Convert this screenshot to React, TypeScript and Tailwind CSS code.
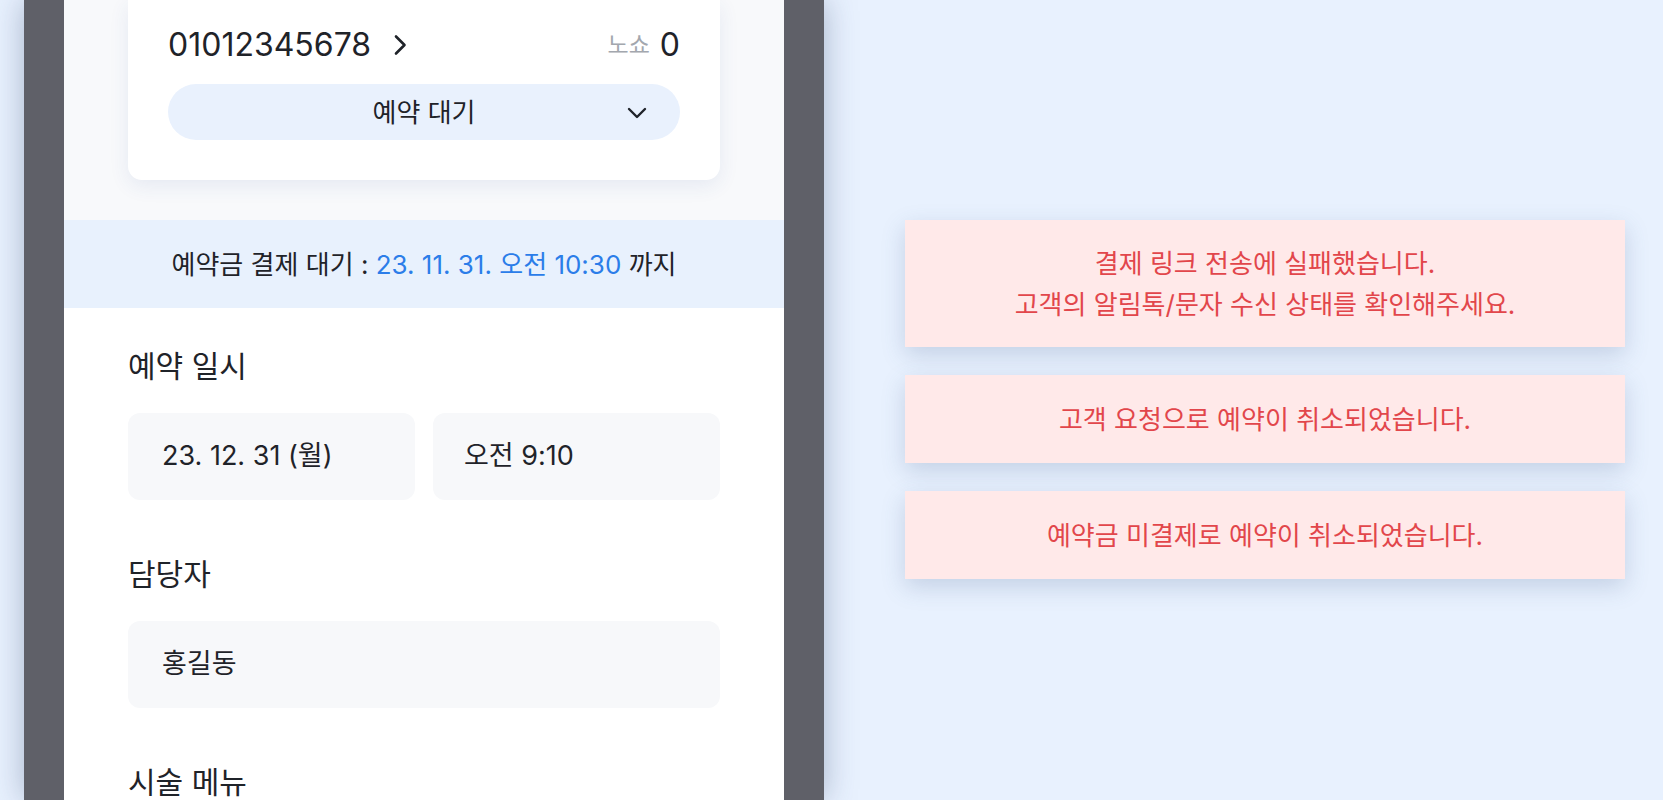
import React from "react";

const font = { fontFamily: "Inter, 'Noto Sans CJK KR', sans-serif" };

function ChevronRight() {
  return (
    <svg width="14" height="22" viewBox="0 0 14 22" fill="none">
      <path d="M3 2.5l8.5 8.5L3 19.5" stroke="#1f2329" strokeWidth="2.6" strokeLinecap="round" strokeLinejoin="round" />
    </svg>
  );
}

function ChevronDown() {
  return (
    <svg width="20" height="12" viewBox="0 0 20 12" fill="none">
      <path d="M2 2l8 8 8-8" stroke="#1f2329" strokeWidth="2.4" strokeLinecap="round" strokeLinejoin="round" />
    </svg>
  );
}

function Section({ title, children }: { title: string; children: React.ReactNode }) {
  return (
    <div className="mb-[54px]">
      <h3 className="text-[30px] leading-[40px] text-[#1f2329] mb-[27px]">{title}</h3>
      {children}
    </div>
  );
}

function Field({ value, pad = "px-[34px]" }: { value: string; pad?: string }) {
  return (
    <div className={`h-[87px] rounded-[12px] bg-[#f7f8fa] flex items-center ${pad} text-[27px] text-[#1f2329]`}>
      {value}
    </div>
  );
}

const toasts = [
  ["결제 링크 전송에 실패했습니다.", "고객의 알림톡/문자 수신 상태를 확인해주세요."],
  ["고객 요청으로 예약이 취소되었습니다."],
  ["예약금 미결제로 예약이 취소되었습니다."],
];

export default function App() {
  return (
    <div style={font} className="h-[800px] w-[1663px] overflow-hidden bg-[#e8f1fe] flex pl-[24px]">
      {/* phone */}
      <div className="w-[800px] h-[800px] bg-[#5f6068] px-[40px] shadow-[0_0_30px_rgba(50,70,110,0.35)] shrink-0">
        <div className="h-full bg-white overflow-hidden">
          <div className="bg-[#f8f9fb] px-[64px] pb-[40px]">
            <div className="bg-white rounded-b-[14px] shadow-[0_6px_20px_rgba(40,80,150,0.09)] px-[40px] pt-[23px] pb-[40px]">
              <div className="flex items-center justify-between h-[44px]">
                <div className="flex items-center gap-[22px]">
                  <span className="text-[32px] leading-[44px] text-[#1f2329]">01012345678</span>
                  <ChevronRight />
                </div>
                <div className="flex items-center gap-[10px]">
                  <span className="text-[23px] text-[#a3a7ae]">노쇼</span>
                  <span className="text-[32px] leading-[44px] text-[#1f2329]">0</span>
                </div>
              </div>
              <div className="mt-[17px] h-[56px] rounded-full bg-[#e9f1fd] relative flex items-center justify-center">
                <span className="text-[26px] text-[#1f2329]">예약 대기</span>
                <span className="absolute right-[33px] top-[23px]">
                  <ChevronDown />
                </span>
              </div>
            </div>
          </div>
          <div className="h-[88px] bg-[#e8f1fd] flex items-center justify-center text-[26px] text-[#1f2329]">
            <span>
              예약금 결제 대기 : <span className="text-[#2b7de9]">23. 11. 31. 오전 10:30</span> 까지
            </span>
          </div>
          <div className="px-[64px] pt-[38px]">
            <Section title="예약 일시">
              <div className="grid grid-cols-2 gap-[18px]">
                <Field value="23. 12. 31 (월)" />
                <Field value="오전 9:10" pad="px-[31px]" />
              </div>
            </Section>
            <Section title="담당자">
              <Field value="홍길동" />
            </Section>
            <Section title="시술 메뉴">
              <div />
            </Section>
          </div>
        </div>
      </div>

      {/* toasts */}
      <div className="ml-[81px] w-[720px] pt-[220px] flex flex-col gap-[28px]">
        {toasts.map((lines, i) => (
          <div
            key={i}
            className={`${lines.length > 1 ? "h-[127px]" : "h-[88px]"} shrink-0 bg-[#ffe9e9] shadow-[0_8px_22px_rgba(70,95,140,0.22)] flex flex-col items-center justify-center text-[26px] leading-[41px] text-[#e2464b]`}
          >
            {lines.map((l) => (
              <div key={l}>{l}</div>
            ))}
          </div>
        ))}
      </div>
    </div>
  );
}
